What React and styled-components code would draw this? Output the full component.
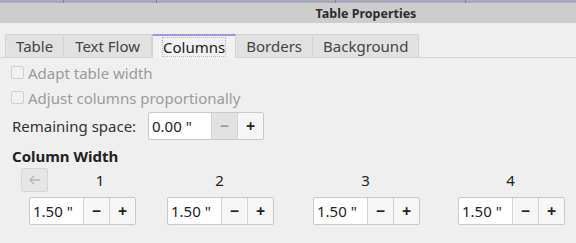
import React from "react"
import styled, { createGlobalStyle } from "styled-components"

const GlobalStyle = createGlobalStyle`
  html, body {
    margin: 0;
    padding: 0;
    background: #efefef;
  }
  body {
    font-family: "Noto Sans", "Open Sans", sans-serif;
    font-size: 15px;
    color: #333;
  }
`

const Window = styled.div`
  width: 576px;
  height: 243px;
  overflow: hidden;
  background: #efefef;
`

const BackStrip = styled.div`
  height: 3px;
  background: #a9acb8;
  display: flex;
`

const StripCell = styled.div`
  width: ${(p) => p.$w}px;
  border-right: 1px solid #7d8296;
`

const TitleBar = styled.div`
  height: 20px;
  background: #cdcdcd;
  display: flex;
  align-items: center;
  justify-content: center;
  padding-left: 156px;
  font-size: 12.5px;
  font-weight: 700;
  color: #2e2e2e;
`

const TabBar = styled.div`
  display: flex;
  align-items: flex-end;
  margin-top: 10px;
  padding-left: 5px;
  border-bottom: 1px solid #d6d6d6;
  height: 24px;
`

const Tab = styled.div`
  height: ${(p) => (p.$active ? 24 : 23)}px;
  box-sizing: border-box;
  padding: 0 ${(p) => p.$pad || 10}px;
  display: flex;
  align-items: center;
  font-size: 15px;
  color: ${(p) => (p.$active ? "#222" : "#444")};
  background: ${(p) => (p.$active ? "#f1f1f1" : "#e1e1e1")};
  border: 1px solid #d3d3d3;
  border-left-width: ${(p) => (p.$first || p.$active ? 1 : 0)}px;
  border-top: ${(p) => (p.$active ? "2px solid #9d97ec" : "1px solid #d3d3d3")};
  border-bottom: none;
  margin-bottom: ${(p) => (p.$active ? -1 : 0)}px;
`

const FocusLabel = styled.span`
  outline: 1px dotted #b8b8c8;
  outline-offset: 0px;
  line-height: 18px;
`

const Body = styled.div`
  padding: 2px 11px 0 11px;
  display: flex;
  flex-direction: column;
`

const CheckRow = styled.label`
  display: flex;
  align-items: center;
  gap: 4px;
  height: 25px;
  color: #9b9b9b;
`

const Box = styled.span`
  width: 13px;
  height: 13px;
  box-sizing: border-box;
  border: 1px solid #d0d0d0;
  border-radius: 2px;
  background: #f1f1f1;
`

const FieldRow = styled.div`
  display: flex;
  align-items: center;
  margin-top: 2px;
  height: 28px;
`

const FieldLabel = styled.span`
  width: 136px;
  padding-left: 1px;
  color: #333;
`

const Spin = styled.div`
  display: flex;
  justify-self: start;
  height: 28px;
  box-sizing: border-box;
  border: 1px solid #c9c9c9;
  border-radius: 2px;
  overflow: hidden;
  background: #fff;
`

const SpinValue = styled.div`
  width: ${(p) => p.$w}px;
  display: flex;
  align-items: center;
  padding-left: 3px;
  box-sizing: border-box;
  color: #222;
  font-size: 15px;
`

const SpinButton = styled.div`
  width: 26px;
  display: flex;
  align-items: center;
  justify-content: center;
  border-left: 1px solid #d3d3d3;
  box-sizing: border-box;
  background: ${(p) => (p.$disabled ? "#e2e2e2" : "#f6f6f6")};
  color: ${(p) => (p.$disabled ? "#9a9a9a" : "#222")};
  font-size: 16px;
  font-weight: 700;
`

const SectionTitle = styled.div`
  margin-top: 6px;
  font-weight: 700;
  font-size: 15px;
  color: #222;
  padding-left: 1px;
  height: 21px;
  line-height: 21px;
`

const Columns = styled.div`
  display: grid;
  grid-template-columns: 138px 146px 145px 105px;
  row-gap: 5px;
  padding-left: 18px;
  margin-top: 1px;
`

const ColHead = styled.div`
  width: 105px;
  height: 24px;
  display: flex;
  align-items: center;
  justify-content: center;
  color: #222;
`

const FirstHead = styled.div`
  width: 131px;
  margin-left: -8px;
  height: 24px;
  display: flex;
  align-items: center;
  color: #222;
`

const HeadNum = styled.span`
  flex: 1;
  text-align: center;
`

const ArrowButton = styled.div`
  width: 27px;
  height: 24px;
  box-sizing: border-box;
  border: 1px solid #d6d6d6;
  border-radius: 2px;
  background: #e6e6e6;
  display: flex;
  align-items: center;
  justify-content: center;
`

const tabs = [
  { name: "Table", first: true },
  { name: "Text Flow", pad: 11 },
  { name: "Columns", active: true },
  { name: "Borders" },
  { name: "Background" },
]

function SpinBox({ value, width, minusDisabled }) {
  return (
    <Spin>
      <SpinValue $w={width}>{value}</SpinValue>
      <SpinButton $disabled={minusDisabled}>−</SpinButton>
      <SpinButton>+</SpinButton>
    </Spin>
  )
}

export default function App() {
  return (
    <Window>
      <GlobalStyle />
      <BackStrip>
        <StripCell $w={63} />
        <StripCell $w={92} />
        <StripCell $w={178} />
        <StripCell $w={129} />
      </BackStrip>
      <TitleBar>Table Properties</TitleBar>
      <TabBar>
        {tabs.map((t) => (
          <Tab key={t.name} $active={t.active} $first={t.first} $pad={t.pad}>
            {t.active ? <FocusLabel>{t.name}</FocusLabel> : t.name}
          </Tab>
        ))}
      </TabBar>
      <Body>
        <CheckRow>
          <Box />
          Adapt table width
        </CheckRow>
        <CheckRow>
          <Box />
          Adjust columns proportionally
        </CheckRow>
        <FieldRow>
          <FieldLabel>Remaining space:</FieldLabel>
          <SpinBox value={'0.00 "'} width={62} minusDisabled />
        </FieldRow>
        <SectionTitle>Column Width</SectionTitle>
        <Columns>
          <FirstHead>
            <ArrowButton>
              <svg width="12" height="10" viewBox="0 0 12 10">
                <path d="M5 1 L1 5 L5 9 M1 5 H11" fill="none" stroke="#b4b4b4" strokeWidth="1.3" />
              </svg>
            </ArrowButton>
            <HeadNum>1</HeadNum>
          </FirstHead>
          <ColHead>2</ColHead>
          <ColHead>3</ColHead>
          <ColHead>4</ColHead>
          {[1, 2, 3, 4].map((n) => (
            <SpinBox key={n} value={'1.50 "'} width={53} />
          ))}
        </Columns>
      </Body>
    </Window>
  )
}
